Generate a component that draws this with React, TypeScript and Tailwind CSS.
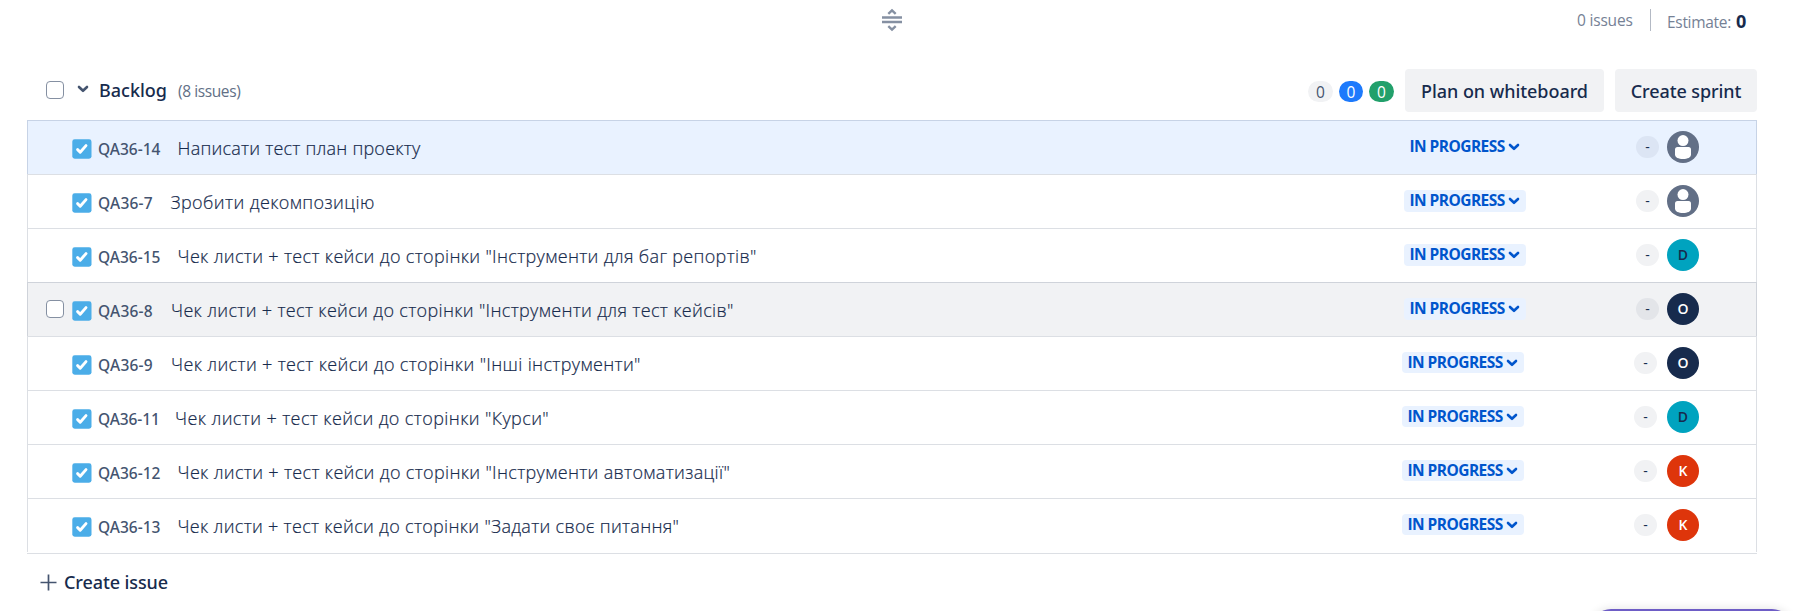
type Issue = {
  id: string;
  keyWidth: string;
  title: string;
  spacing?: string;
  person: 'none' | 'D' | 'O' | 'K';
  state?: 'selected' | 'hover';
  shifted?: boolean;
};

const issues: Issue[] = [
  { id: 'QA36-14', keyWidth: 'w-[79.5px]', title: 'Написати тест план проекту', spacing: 'tracking-[0.22px]', person: 'none', state: 'selected' },
  { id: 'QA36-7', keyWidth: 'w-[72.5px] tracking-[0.2px]', title: 'Зробити декомпозицію', spacing: 'tracking-[0.4px]', person: 'none' },
  { id: 'QA36-15', keyWidth: 'w-[79.5px]', title: 'Чек листи + тест кейси до сторінки "Інструменти для баг репортів"', person: 'D' },
  { id: 'QA36-8', keyWidth: 'w-[73px] tracking-[0.2px]', title: 'Чек листи + тест кейси до сторінки "Інструменти для тест кейсів"', person: 'O', state: 'hover' },
  { id: 'QA36-9', keyWidth: 'w-[73px] tracking-[0.2px]', title: 'Чек листи + тест кейси до сторінки "Інші інструменти"', spacing: 'tracking-[0.35px]', person: 'O', shifted: true },
  { id: 'QA36-11', keyWidth: 'w-[77px] tracking-[-0.1px]', title: 'Чек листи + тест кейси до сторінки "Курси"', spacing: 'tracking-[0.39px]', person: 'D', shifted: true },
  { id: 'QA36-12', keyWidth: 'w-[79.5px]', title: 'Чек листи + тест кейси до сторінки "Інструменти автоматизації"', person: 'K', shifted: true },
  { id: 'QA36-13', keyWidth: 'w-[79.5px]', title: 'Чек листи + тест кейси до сторінки "Задати своє питання"', spacing: 'tracking-[0.3px]', person: 'K', shifted: true },
];

const rowStyles = {
  selected: 'bg-[#e9f2ff] border-t-[#c7d3e6] border-x-[#c7d3e6]',
  hover: 'bg-[#f1f2f4] border-t-[#cfd3da] border-x-[#cfd3da]',
  plain: 'bg-white border-[#dcdfe4]',
};

const avatarStyles = {
  D: 'bg-[#00a3bf] text-[#172b4d]',
  O: 'bg-[#172b4d] text-white',
  K: 'bg-[#de350b] text-white',
};

function Checkbox() {
  return <span className="block h-[18px] w-[18px] shrink-0 rounded-[4px] border-[1.5px] border-[#8590a2] bg-white" />;
}

function TaskIcon() {
  return (
    <svg className="block h-5 w-5 shrink-0" viewBox="0 0 20 20">
      <rect x="0.3" y="0.3" width="19.2" height="19.4" rx="2.4" fill="#4bade8" />
      <path d="M5.6 10.600 8.2 13.200 14 6.600" fill="none" stroke="#fff" strokeWidth="2.9" strokeLinecap="round" strokeLinejoin="round" />
    </svg>
  );
}

function Chevron({ className }: { className: string }) {
  return (
    <svg className={className} viewBox="0 0 12 8" fill="none">
      <path d="M2 2 6 5.8 10 2" stroke="currentColor" strokeWidth="2.6" strokeLinecap="round" strokeLinejoin="round" />
    </svg>
  );
}

function Avatar({ person }: { person: Issue['person'] }) {
  if (person === 'none') {
    return (
      <svg className="block h-8 w-8" viewBox="0 0 32 32">
        <circle cx="16" cy="16" r="16" fill="#626f86" />
        <circle cx="16" cy="9.6" r="5.5" fill="#fff" />
        <path d="M8 18.5Q8 16 10.5 16H21.500Q24 16 24 18.500V23.500C24 26.500 20.500 28 16 28S8 26.500 8 23.500Z" fill="#fff" />
      </svg>
    );
  }
  return (
    <span className={`flex h-8 w-8 items-center justify-center rounded-full text-[14px] font-semibold leading-none ${avatarStyles[person]}`}>
      {person}
    </span>
  );
}

function IssueRow({ issue }: { issue: Issue }) {
  return (
    <div className={`flex h-[54px] items-start border-x border-t pl-[18px] pr-[57px] ${rowStyles[issue.state ?? 'plain']}`}>
      <div className="w-[26px] pt-[17px]">{issue.state === 'hover' && <Checkbox />}</div>
      <div className="pt-[18px]"><TaskIcon /></div>
      <div className={`ml-[6px] whitespace-nowrap pt-[17px] font-['Noto_Sans'] text-[15.5px] font-medium leading-[22px] text-[#44546f] ${issue.keyWidth}`}>{issue.id}</div>
      <div className={`whitespace-nowrap pt-[15px] text-[18px] font-light leading-6 text-[#172b4d] [-webkit-text-stroke:0.2px_#172b4d] ${issue.spacing ?? 'tracking-[0.33px]'}`}>{issue.title}</div>
      <div className="ml-auto flex">
        <div className={`mr-[110px] mt-[15px] flex w-[122px] items-start rounded-[4px] bg-[#e9f2ff] pl-[5.5px] text-[#0055cc] ${issue.shifted ? 'h-[21px]' : 'h-[22px]'}`}>
          <span className="w-[98px] whitespace-nowrap text-[15.5px] font-bold leading-[21px] tracking-[-0.55px]">IN PROGRESS</span>
          <Chevron className="mt-[7px] h-2 w-3" />
        </div>
        <div className={`mt-[15px] flex h-[22px] w-[23px] items-center justify-center rounded-full text-[14px] leading-none text-[#172b4d] ${issue.shifted ? 'mr-[10px]' : 'mr-2'} ${issue.state === 'selected' ? 'bg-[#dce5f4]' : issue.state === 'hover' ? 'bg-[#e3e5e9]' : 'bg-[#f1f2f4]'}`}>-</div>
        <div className="mt-[10px]"><Avatar person={issue.person} /></div>
      </div>
    </div>
  );
}

function ResizeHandle() {
  return (
    <svg className="h-6 w-5 shrink-0" viewBox="0 0 20 24" fill="none" stroke="#8590a2" strokeWidth="2.4">
      <path d="M6.3 5.800 10 2.400 13.700 5.800M6.300 18.200 10 21.600 13.700 18.200" />
      <path d="M0 9.500H20M0 14H20" />
    </svg>
  );
}

export default function App() {
  return (
    <div className="relative h-[611px] w-[1801px] overflow-hidden bg-white font-['Open_Sans','Noto_Sans',sans-serif] text-[#172b4d]">
      <div className="flex h-[69px] items-start pl-[882px] pt-2">
        <ResizeHandle />
        <div className="ml-[675px] w-[73px] whitespace-nowrap text-[15.5px] leading-6 tracking-[-0.2px] text-[#758195]">0 issues</div>
        <div className="mt-px h-[22px] w-px bg-[#b3b9c4]" />
        <div className="ml-4 flex w-[69px] whitespace-nowrap pt-[2px] text-[15.5px] leading-6 tracking-[-0.3px] text-[#758195]">Estimate:</div>
        <div className="pt-px text-[18px] font-bold leading-6">0</div>
      </div>

      <div className="flex h-[51px] items-start pl-[46px] pr-[44px]">
        <div className="pt-3"><Checkbox /></div>
        <Chevron className="ml-[13px] mt-4 h-2 w-3 text-[#44546f]" />
        <h2 className="ml-[10px] w-[79px] whitespace-nowrap pt-[9px] font-['Noto_Sans'] text-[18px] font-medium leading-6">Backlog</h2>
        <span className="whitespace-nowrap pt-[10px] text-[15.5px] leading-6 tracking-[-0.4px] text-[#626f86]">(8 issues)</span>
        <div className="ml-auto flex items-start">
          <div className="flex gap-[6px] pt-3 text-[15.5px] leading-[22px]">
            <span className="h-[21px] w-[25px] rounded-full bg-[#f1f2f4] text-center text-[#44546f]">0</span>
            <span className="h-[21px] w-6 rounded-full bg-[#1d7afc] text-center text-white">0</span>
            <span className="h-[21px] w-[25px] rounded-full bg-[#22a06b] text-center text-white">0</span>
          </div>
          <button className="ml-[11px] h-[43px] w-[199px] whitespace-nowrap rounded-[4px] bg-[#f1f2f4] font-['Noto_Sans'] text-[18px] font-medium leading-[44px] tracking-[-0.05px]">Plan on whiteboard</button>
          <button className="ml-[11px] h-[43px] w-[142px] whitespace-nowrap rounded-[4px] bg-[#f1f2f4] font-['Noto_Sans'] text-[18px] font-medium leading-[44px] tracking-[-0.1px]">Create sprint</button>
        </div>
      </div>

      <div className="ml-[27px] w-[1730px] border-b border-[#dcdfe4] pb-px">
        {issues.map((issue) => <IssueRow key={issue.id} issue={issue} />)}
      </div>

      <button className="ml-[40px] mt-[15px] flex items-center gap-[7px] font-['Noto_Sans'] text-[18px] font-medium leading-[26px] tracking-[-0.1px]">
        <svg className="h-[17px] w-[17px]" viewBox="0 0 17 17" stroke="#44546f" strokeWidth="1.7">
          <path d="M8.500 0.500V16.500M0.500 8.500H16.500" />
        </svg>
        <span className="whitespace-nowrap">Create issue</span>
      </button>

      <div className="absolute left-[1591px] top-[609px] h-10 w-[201px] rounded-full bg-[#6e5dc6] shadow-[0_0_10px_rgba(0,0,0,0.12)]" />
    </div>
  );
}
